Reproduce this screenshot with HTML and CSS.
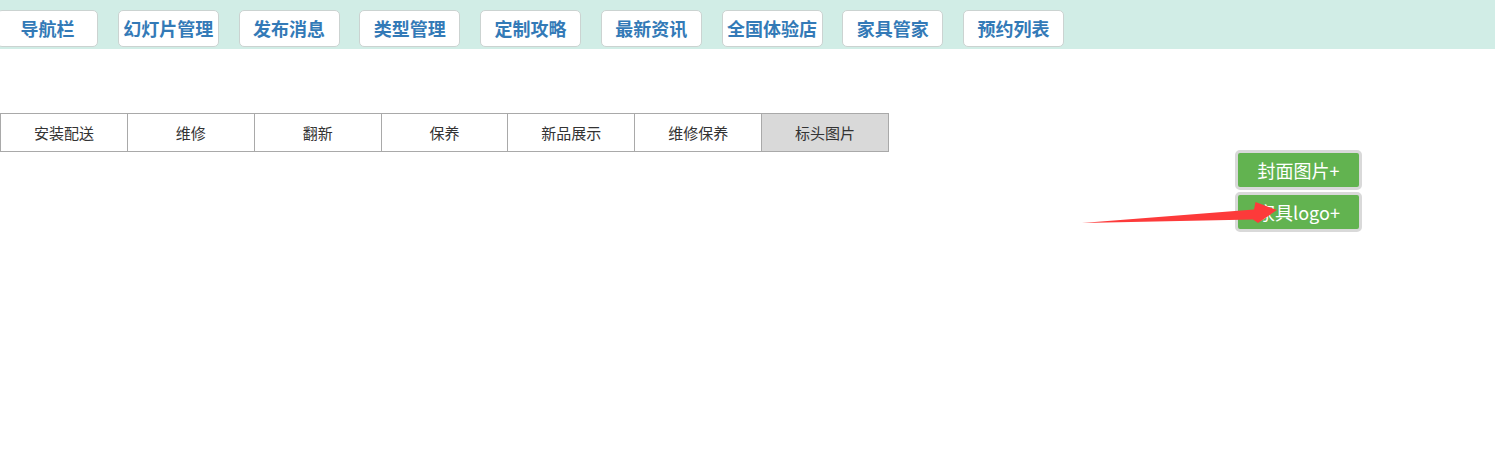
FILE: index.html
```html
<!DOCTYPE html>
<html lang="zh-CN">
<head>
    <meta charset="UTF-8">
    <meta name="viewport" content="width=device-width, initial-scale=1.0">
    <title>后台管理</title>
    <link rel="stylesheet" href="styles.css">
</head>
<body>
    <!-- top menu -->
    <nav class="topnav">
        <a class="navbtn" href="#">导航栏</a>
        <a class="navbtn" href="#">幻灯片管理</a>
        <a class="navbtn" href="#">发布消息</a>
        <a class="navbtn" href="#">类型管理</a>
        <a class="navbtn" href="#">定制攻略</a>
        <a class="navbtn" href="#">最新资讯</a>
        <a class="navbtn" href="#">全国体验店</a>
        <a class="navbtn" href="#">家具管家</a>
        <a class="navbtn" href="#">预约列表</a>
    </nav>

    <!-- sub tabs -->
    <div class="tabs">
        <div class="tab">安装配送</div>
        <div class="tab">维修</div>
        <div class="tab">翻新</div>
        <div class="tab">保养</div>
        <div class="tab">新品展示</div>
        <div class="tab">维修保养</div>
        <div class="tab active">标头图片</div>
    </div>

    <div class="actions">
        <button class="addbtn">封面图片+</button>
        <button class="addbtn">家具logo+</button>
    </div>

    <!-- annotation arrow -->
    <svg class="arrow" width="1495" height="452" viewBox="0 0 1495 452">
        <polygon points="1082,223 1254,209.5 1255.5,202 1277,210 1258,223 1253,219.5" fill="#fd3a3a"/>
    </svg>
</body>
</html>
```

FILE: styles.css
```css
body {
    margin: 0;
    padding: 0;
    font-family: "Noto Sans CJK SC", "Liberation Sans", sans-serif;
    background-color: #fff;
}

.topnav {
    display: flex;
    gap: 19.75px;
    height: 49px;
    padding-top: 10px;
    box-sizing: border-box;
    background-color: #d1ede6; /* mint */
}

.navbtn {
    display: block;
    flex: none;
    width: 101px;
    height: 37px;
    line-height: 34px;
    box-sizing: border-box;
    border: 1px solid #cbd3d1;
    border-radius: 5px;
    background-color: #fff;
    color: #337ab7;
    font-size: 18px;
    font-weight: bold;
    text-align: center;
    text-decoration: none;
}

.navbtn:first-child {
    margin-left: -3px;
}

.tabs {
    display: flex;
    margin-top: 64px;
    width: 889px;
    border-left: 1px solid #a9a9a9;
    box-sizing: border-box;
}

.tab {
    width: 127px;
    height: 39px;
    line-height: 37px;
    box-sizing: border-box;
    border-top: 1px solid #a9a9a9;
    border-bottom: 1px solid #a9a9a9;
    border-right: 1px solid #a9a9a9;
    font-size: 15px;
    color: #333;
    text-align: center;
}

.tab.active {
    background-color: #d9d9d9;
}

.actions {
    display: flex;
    flex-direction: column;
    align-items: flex-end;
    gap: 2px;
    margin-top: -2px;
    padding-right: 133px;
}

.addbtn {
    width: 127px;
    height: 40px;
    box-sizing: border-box;
    border: 3px solid #d9d9d9;
    border-radius: 5px;
    background-color: #62b350; /* green */
    color: #fff;
    font-family: "Noto Sans CJK SC", "Liberation Sans", sans-serif;
    font-size: 18px;
    padding: 0;
    cursor: pointer;
}

.arrow {
    position: absolute;
    left: 0;
    top: 0;
    pointer-events: none;
}
```
